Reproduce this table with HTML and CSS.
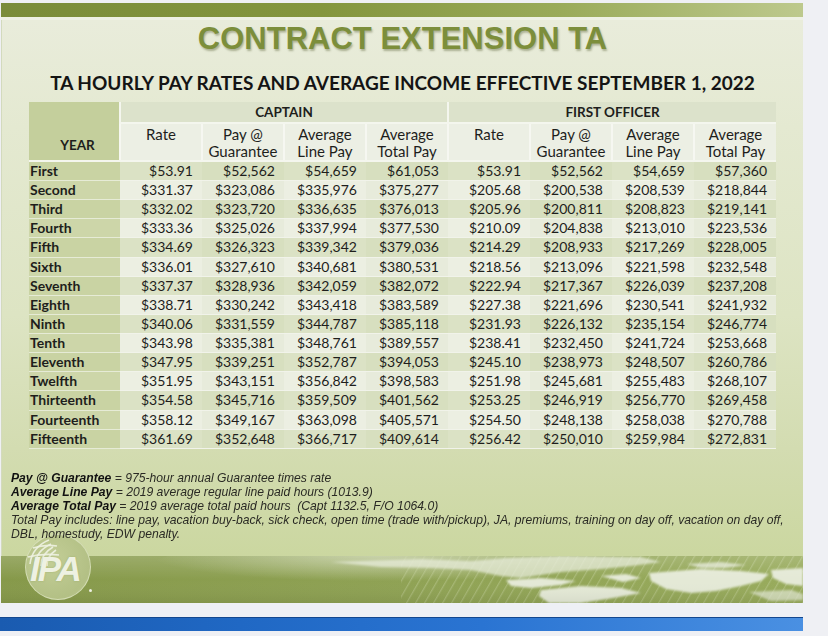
FILE: index.html
```html
<!DOCTYPE html>
<html lang="en">
<head>
<meta charset="utf-8">
<title>Contract Extension TA</title>
<link rel="stylesheet" href="styles.css">
</head>
<body>
<div class="page">
  <div class="slide">
    <div class="topbar"></div>
    <div class="slide-body">
      <h1 class="title">CONTRACT EXTENSION TA</h1>
      <h2 class="subtitle">TA HOURLY PAY RATES AND AVERAGE INCOME EFFECTIVE SEPTEMBER 1, 2022</h2>
      <table class="rates">
        <colgroup>
          <col class="c-year">
          <col class="c-num"><col class="c-num"><col class="c-num"><col class="c-num">
          <col class="c-num"><col class="c-num"><col class="c-num"><col class="c-num">
        </colgroup>
        <thead>
          <tr class="h1">
            <th class="year-h" rowspan="2">YEAR</th>
            <th class="group" colspan="4">CAPTAIN</th>
            <th class="group" colspan="4">FIRST OFFICER</th>
          </tr>
          <tr class="h2">
            <th>Rate</th><th>Pay @<br>Guarantee</th><th>Average<br>Line Pay</th><th>Average<br>Total Pay</th>
            <th>Rate</th><th>Pay @<br>Guarantee</th><th>Average<br>Line Pay</th><th>Average<br>Total Pay</th>
          </tr>
        </thead>
        <tbody>
          <tr><th>First</th><td>$53.91</td><td>$52,562</td><td>$54,659</td><td>$61,053</td><td>$53.91</td><td>$52,562</td><td>$54,659</td><td>$57,360</td></tr>
          <tr><th>Second</th><td>$331.37</td><td>$323,086</td><td>$335,976</td><td>$375,277</td><td>$205.68</td><td>$200,538</td><td>$208,539</td><td>$218,844</td></tr>
          <tr><th>Third</th><td>$332.02</td><td>$323,720</td><td>$336,635</td><td>$376,013</td><td>$205.96</td><td>$200,811</td><td>$208,823</td><td>$219,141</td></tr>
          <tr><th>Fourth</th><td>$333.36</td><td>$325,026</td><td>$337,994</td><td>$377,530</td><td>$210.09</td><td>$204,838</td><td>$213,010</td><td>$223,536</td></tr>
          <tr><th>Fifth</th><td>$334.69</td><td>$326,323</td><td>$339,342</td><td>$379,036</td><td>$214.29</td><td>$208,933</td><td>$217,269</td><td>$228,005</td></tr>
          <tr><th>Sixth</th><td>$336.01</td><td>$327,610</td><td>$340,681</td><td>$380,531</td><td>$218.56</td><td>$213,096</td><td>$221,598</td><td>$232,548</td></tr>
          <tr><th>Seventh</th><td>$337.37</td><td>$328,936</td><td>$342,059</td><td>$382,072</td><td>$222.94</td><td>$217,367</td><td>$226,039</td><td>$237,208</td></tr>
          <tr><th>Eighth</th><td>$338.71</td><td>$330,242</td><td>$343,418</td><td>$383,589</td><td>$227.38</td><td>$221,696</td><td>$230,541</td><td>$241,932</td></tr>
          <tr><th>Ninth</th><td>$340.06</td><td>$331,559</td><td>$344,787</td><td>$385,118</td><td>$231.93</td><td>$226,132</td><td>$235,154</td><td>$246,774</td></tr>
          <tr><th>Tenth</th><td>$343.98</td><td>$335,381</td><td>$348,761</td><td>$389,557</td><td>$238.41</td><td>$232,450</td><td>$241,724</td><td>$253,668</td></tr>
          <tr><th>Eleventh</th><td>$347.95</td><td>$339,251</td><td>$352,787</td><td>$394,053</td><td>$245.10</td><td>$238,973</td><td>$248,507</td><td>$260,786</td></tr>
          <tr><th>Twelfth</th><td>$351.95</td><td>$343,151</td><td>$356,842</td><td>$398,583</td><td>$251.98</td><td>$245,681</td><td>$255,483</td><td>$268,107</td></tr>
          <tr><th>Thirteenth</th><td>$354.58</td><td>$345,716</td><td>$359,509</td><td>$401,562</td><td>$253.25</td><td>$246,919</td><td>$256,770</td><td>$269,458</td></tr>
          <tr><th>Fourteenth</th><td>$358.12</td><td>$349,167</td><td>$363,098</td><td>$405,571</td><td>$254.50</td><td>$248,138</td><td>$258,038</td><td>$270,788</td></tr>
          <tr><th>Fifteenth</th><td>$361.69</td><td>$352,648</td><td>$366,717</td><td>$409,614</td><td>$256.42</td><td>$250,010</td><td>$259,984</td><td>$272,831</td></tr>
        </tbody>
      </table>
      <div class="notes">
        <p><b>Pay @ Guarantee</b> = 975-hour annual Guarantee times rate</p>
        <p><b>Average Line Pay</b> = 2019 average regular line paid hours (1013.9)</p>
        <p><b>Average Total Pay</b> = 2019 average total paid hours&nbsp; (Capt 1132.5, F/O 1064.0)</p>
        <p>Total Pay includes: line pay, vacation buy-back, sick check, open time (trade with/pickup), JA, premiums, training on day off, vacation on day off,<br>DBL, homestudy, EDW penalty.</p>
      </div>
    </div>
    <div class="banner">
      <svg class="banner-art" width="802" height="47" viewBox="0 0 802 47" preserveAspectRatio="none">
        <defs>
          <linearGradient id="bg" x1="0" y1="0" x2="1" y2="0">
            <stop offset="0" stop-color="#86994a"/>
            <stop offset="0.45" stop-color="#8ea153"/>
            <stop offset="1" stop-color="#98ab5c"/>
          </linearGradient>
          <linearGradient id="shade" x1="0" y1="0" x2="0" y2="1">
            <stop offset="0" stop-color="#ffffff" stop-opacity="0.16"/>
            <stop offset="0.5" stop-color="#ffffff" stop-opacity="0"/>
            <stop offset="1" stop-color="#000000" stop-opacity="0.06"/>
          </linearGradient>
          <radialGradient id="haze" cx="0.5" cy="0.3" r="0.5">
            <stop offset="0" stop-color="#eef2e2" stop-opacity="0.5"/>
            <stop offset="1" stop-color="#eef2e2" stop-opacity="0"/>
          </radialGradient>
          <pattern id="stripes" width="9" height="47" patternUnits="userSpaceOnUse" patternTransform="skewX(-30)">
            <rect x="0" y="0" width="1.4" height="47" fill="#c9d4a3" fill-opacity="0.4"/>
          </pattern>
          <filter id="soft" x="-5%" y="-20%" width="110%" height="140%">
            <feGaussianBlur stdDeviation="1"/>
          </filter>
        </defs>
        <rect width="802" height="47" fill="url(#bg)"/>
        <ellipse cx="380" cy="10" rx="230" ry="26" fill="url(#haze)"/>
        <rect x="400" y="0" width="402" height="47" fill="url(#stripes)"/>
        <g fill="#e4e9d6" filter="url(#soft)">
          <path d="M330 6 L420 3 L470 5 L505 2 L560 0 L640 1 L660 6 L630 10 L600 13 L560 16 L540 19 L520 22 L500 20 L470 14 L430 12 L380 11 Z" fill-opacity="0.75"/>
          <path d="M505 24 L540 22 L575 25 L560 29 L530 32 L510 30 Z"/>
          <path d="M540 34 L580 30 L620 32 L640 37 L612 42 L580 47 L548 47 L538 40 Z"/>
          <path d="M600 20 L625 18 L640 22 L622 26 Z"/>
          <path d="M648 17 L700 13 L740 15 L768 18 L760 25 L740 30 L715 35 L690 37 L665 33 L650 25 Z"/>
          <path d="M686 8 L720 6 L745 9 L725 12 L700 12 Z" fill-opacity="0.8"/>
          <path d="M770 14 L802 12 L802 30 L785 28 L772 22 Z"/>
          <path d="M748 36 L790 34 L802 38 L802 44 L770 45 Z" fill-opacity="0.7"/>
        </g>
        <rect width="802" height="47" fill="url(#shade)"/>
      </svg>
    </div>
    <div class="logo">
      <div class="logo-disc"></div>
      <svg class="logo-globe" width="68" height="70" viewBox="0 0 68 70">
        <g fill="none" stroke="#eef2e2" stroke-width="1.6" stroke-opacity="0.9">
          <path d="M6 32 Q8 15 25 8"/>
          <path d="M11 33 Q12 19 27 12"/>
          <path d="M17 34 Q17 22 29 15"/>
          <path d="M23 34 Q23 24 32 18"/>
          <path d="M4 25 Q18 21 35 23"/>
          <path d="M9 16 Q21 12 33 14"/>
        </g>
      </svg>
      <span class="logo-text">IPA</span>
      <span class="logo-dot"></span>
    </div>
  </div>
  <div class="gap"></div>
  <div class="bluebar"></div>
</div>
</body>
</html>
```

FILE: styles.css
```css
* { box-sizing: border-box; }

html, body {
  margin: 0;
  padding: 0;
}

body {
  background: #f6f7f9;
  width: 828px;
  height: 636px;
  overflow: hidden;
}

.page {
  width: 828px;
  height: 636px;
  background: #eff0f4;
  padding-top: 3px;
}

.slide {
  position: relative;
  width: 802px;
  margin-left: 1px;
}

.topbar {
  height: 17px;
  background: linear-gradient(90deg, #7a8c3a 0%, #84963f 40%, #9aab5a 70%, #bdc98d 100%);
  border-bottom: 3px solid #eef1e4;
}

.slide-body {
  height: 536px;
  padding-top: 1px;
  border-left: 1px solid #d3dabd;
  background: linear-gradient(180deg, #e9ecdb 0%, #e4e9d1 20%, #dde4c3 55%, #d3dcb1 80%, #cbd7a0 100%);
  display: flex;
  flex-direction: column;
  align-items: center;
}

.title {
  margin: 0;
  font-family: "Liberation Sans", Arial, sans-serif;
  font-weight: bold;
  font-size: 31px;
  line-height: 36px;
  color: #7c8e3b;
  text-shadow: 1px 2px 2px rgba(60, 70, 20, 0.35);
}

.subtitle {
  margin: 14px 0 0;
  font-family: Lato, "Open Sans", sans-serif;
  font-weight: bold;
  font-size: 19px;
  line-height: 24px;
  color: #141414;
}

.rates {
  margin-top: 7px;
  width: 747px;
  table-layout: fixed;
  border-collapse: collapse;
  font-family: Lato, "Open Sans", sans-serif;
  color: #1e1e1c;
}

.c-year { width: 91px; }
.c-num { width: 82px; }

.rates th, .rates td {
  padding: 0;
}

.rates .h1 th {
  height: 21px;
  font-size: 13.5px;
  font-weight: bold;
  line-height: 20px;
  text-align: center;
  vertical-align: middle;
}

.rates .group {
  background: #dce2cb;
  border-left: 2px solid #f4f6ee;
  border-bottom: 2px solid #f4f6ee;
}

.rates .year-h {
  background: #c4cf9c;
  text-align: left;
  vertical-align: top;
  padding: 28px 0 0 7px;
  font-size: 14px;
  border-bottom: 2px solid #f4f6ee;
}

.rates .h2 th {
  height: 37px;
  background: #ecefe4;
  font-weight: normal;
  font-size: 15px;
  line-height: 17px;
  vertical-align: top;
  padding-top: 2px;
  text-align: center;
  border-left: 2px solid #f6f7f1;
  border-bottom: 2px solid #f4f6ee;
}

.rates tbody tr {
  height: 19.13px;
}

.rates tbody th {
  text-align: left;
  font-weight: bold;
  font-size: 14px;
  line-height: 18px;
  padding-left: 1px;
  background: #c9d3a3;
  border-bottom: 1px solid #e6ebd6;
}

.rates tbody td {
  text-align: right;
  font-size: 14px;
  line-height: 18px;
  padding-right: 9px;
  border-bottom: 1px solid #f1f3ea;
}

.rates tbody tr:nth-child(odd) td { background: #dbe2c5; }
.rates tbody tr:nth-child(odd) td:nth-child(odd) { background: #d7dfbf; }
.rates tbody tr:nth-child(even) td { background: #ecefe2; }
.rates tbody tr:nth-child(even) td:nth-child(odd) { background: #e7ebdb; }
.rates tbody tr:nth-child(even) th { background: #cdd6a9; }

.notes {
  position: relative;
  z-index: 2;
  align-self: flex-start;
  width: 880px;
  margin-top: 22px;
  margin-left: 9px;
  font-family: "Liberation Sans", Arial, sans-serif;
  font-style: italic;
  font-size: 13.5px;
  line-height: 14px;
  color: #2a2a24;
  white-space: nowrap;
  transform: scaleX(0.9);
  transform-origin: left top;
}

.notes p {
  margin: 0;
}

.notes b {
  font-weight: bold;
  color: #111;
}

.banner {
  height: 47px;
}

.banner-art {
  display: block;
}

.logo {
  position: absolute;
  left: 23px;
  top: 529px;
  width: 70px;
  height: 70px;
  z-index: 1;
}

.logo-disc {
  position: absolute;
  left: 1px;
  top: 2px;
  width: 66px;
  height: 66px;
  border-radius: 50%;
  background: radial-gradient(circle at 40% 40%, #c3ce97 0%, #b3c085 70%, #c0cb95 100%);
  border: 1px solid rgba(225, 232, 200, 0.7);
}

.logo-globe {
  position: absolute;
  left: 0;
  top: 0;
}

.logo-text {
  position: absolute;
  left: 6px;
  top: 17px;
  font-family: "Liberation Sans", Arial, sans-serif;
  font-weight: bold;
  font-style: italic;
  font-size: 35px;
  line-height: 40px;
  letter-spacing: -2px;
  color: #eef1e2;
  text-shadow: 0 0 2px rgba(120, 140, 60, 0.4);
}

.logo-dot {
  position: absolute;
  left: 65px;
  top: 57px;
  width: 3px;
  height: 3px;
  border-radius: 50%;
  background: #eef1e2;
}

.gap {
  height: 14px;
  width: 803px;
  background: #eef0f5;
}

.bluebar {
  height: 14px;
  width: 803px;
  background: linear-gradient(90deg, #1a5bb0 0%, #2068c4 30%, #2a74d2 60%, #4a90e2 100%);
  border-top: 1px solid #13478f;
}
```
